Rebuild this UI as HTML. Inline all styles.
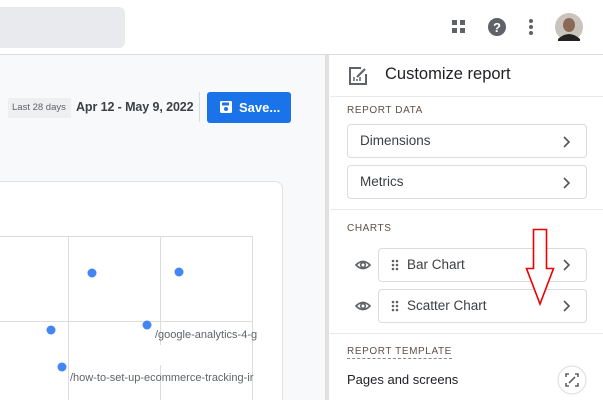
<!DOCTYPE html>
<html><head><style>
*{box-sizing:border-box;margin:0;padding:0}
html,body{width:603px;height:400px;overflow:hidden}
body{position:relative;background:#fff;font-family:"Liberation Sans",Arial,sans-serif;color:#202124}
.a{position:absolute}
.box{position:absolute;border:1px solid #dadce0;border-radius:4px;background:#fff;font-size:13.5px;color:#3c4043}
.lbl{position:absolute;font-size:10px;letter-spacing:.6px;color:#5f4f4a}
</style></head><body>
<div class="a" style="left:0;top:7px;width:125px;height:41px;background:#e8eaed;border-radius:0 6px 6px 0"></div>
<svg class="a" style="left:450px;top:18px" width="18" height="18"><g fill="#5f6368"><rect x="2" y="2" width="5" height="5"/><rect x="10" y="2" width="5" height="5"/><rect x="2" y="10" width="5" height="5"/><rect x="10" y="10" width="5" height="5"/></g></svg>
<svg class="a" style="left:487px;top:17px" width="20" height="20"><circle cx="10" cy="10" r="9" fill="#5f6368"/><text x="10" y="15" font-size="13" font-weight="bold" fill="#fff" text-anchor="middle" font-family="Liberation Sans">?</text></svg>
<svg class="a" style="left:526px;top:17px" width="10" height="20"><g fill="#5f6368"><circle cx="5" cy="4" r="2"/><circle cx="5" cy="10" r="2"/><circle cx="5" cy="16" r="2"/></g></svg>
<svg class="a" style="left:555px;top:13px" width="28" height="28"><circle cx="14" cy="14" r="14" fill="#c9c4be"/><ellipse cx="14" cy="12" rx="6" ry="7" fill="#8a6a55"/><path d="M3 26 Q14 16 25 26 L25 28 L3 28Z" fill="#222"/></svg>
<div class="a" style="left:0;top:54px;width:603px;height:1px;background:#dadce0"></div>
<div class="a" style="left:0;top:55px;width:325px;height:345px;background:#f8f9fa"></div>
<div class="a" style="left:325px;top:55px;width:4px;height:345px;background:#e0e0e0"></div>
<div class="a" style="left:8px;top:98px;width:63px;height:20px;background:#eeeff1;font-size:9.5px;color:#5f6368;line-height:20px;padding-left:4px">Last 28 days</div>
<div class="a" style="left:76px;top:100px;font-size:12.5px;font-weight:bold;color:#3c4043;letter-spacing:-0.1px">Apr 12 - May 9, 2022</div>
<div class="a" style="left:199px;top:92px;width:1px;height:30px;background:#dadce0"></div>
<div class="a" style="left:207px;top:92px;width:84px;height:31px;background:#1a73e8;border-radius:3px;color:#fff;font-size:13px;font-weight:bold;line-height:31px;padding-left:32px">Save...</div>
<svg class="a" style="left:219px;top:100px" width="14" height="14"><rect x="1" y="1" width="12" height="12" rx="1.5" fill="#fff"/><rect x="3" y="2.5" width="7" height="3" fill="#1a73e8"/><circle cx="7" cy="9" r="2" fill="#1a73e8"/></svg>
<div class="a" style="left:0;top:181px;width:283px;height:219px;background:#fff;border:1px solid #e3e3e3;border-left:none;border-bottom:none;border-radius:0 8px 0 0"></div>
<svg class="a" style="left:0;top:230px" width="290" height="170">
<g stroke="#dadce0" stroke-width="1"><line x1="0" y1="6.5" x2="252" y2="6.5"/><line x1="0" y1="91.5" x2="252" y2="91.5"/><line x1="68.5" y1="6" x2="68.5" y2="170"/><line x1="160.5" y1="6" x2="160.5" y2="170"/><line x1="252.5" y1="6" x2="252.5" y2="170"/></g>
<rect x="160" y="115" width="92" height="20" fill="#fff"/>
<g fill="#4285f4"><circle cx="92" cy="43" r="4.5"/><circle cx="179" cy="42" r="4.5"/><circle cx="51" cy="100" r="4.5"/><circle cx="147" cy="95" r="4.5"/><circle cx="62" cy="137" r="4.5"/></g>
<text x="155" y="108" font-size="11" fill="#5f6368" font-family="Liberation Sans">/google-analytics-4-g</text>
<text x="70" y="151" font-size="11" fill="#5f6368" font-family="Liberation Sans">/how-to-set-up-ecommerce-tracking-ir</text>
</svg>
<svg class="a" style="left:348px;top:66px" width="20" height="20"><path d="M13 2H2v16h16V8" fill="none" stroke="#5f6368" stroke-width="2"/><path d="M9 11l8-8" stroke="#5f6368" stroke-width="2"/><path d="M6 15v-4M9 15v-2M12 15v-4" stroke="#5f6368" stroke-width="1.5"/></svg>
<div class="a" style="left:385px;top:65px;font-size:16.5px;color:#202124">Customize report</div>
<div class="a" style="left:330px;top:96px;width:273px;height:1px;background:#e8eaed"></div>
<div class="lbl" style="left:347px;top:105px">REPORT DATA</div>
<div class="box" style="left:347px;top:124px;width:240px;height:34px;line-height:32px;padding-left:12px">Dimensions</div>
<div class="box" style="left:347px;top:165px;width:240px;height:34px;line-height:32px;padding-left:12px">Metrics</div>
<div class="a" style="left:330px;top:209px;width:273px;height:1px;background:#e8eaed"></div>
<div class="lbl" style="left:347px;top:223px">CHARTS</div>
<div class="box" style="left:378px;top:248px;width:209px;height:34px;line-height:32px;padding-left:28px">Bar Chart</div>
<div class="box" style="left:378px;top:289px;width:209px;height:34px;line-height:32px;padding-left:28px">Scatter Chart</div>
<svg class="a" style="left:0;top:0" width="603" height="400">
<g fill="none" stroke="#555" stroke-width="1.6"><path d="M564 137l5 5-5 5M564 178l5 5-5 5M564 260l5 5-5 5M564 301l5 5-5 5"/></g>
<g fill="#5f6368"><circle cx="393" cy="261" r="1.3"/><circle cx="397" cy="261" r="1.3"/><circle cx="393" cy="265" r="1.3"/><circle cx="397" cy="265" r="1.3"/><circle cx="393" cy="269" r="1.3"/><circle cx="397" cy="269" r="1.3"/>
<circle cx="393" cy="302" r="1.3"/><circle cx="397" cy="302" r="1.3"/><circle cx="393" cy="306" r="1.3"/><circle cx="397" cy="306" r="1.3"/><circle cx="393" cy="310" r="1.3"/><circle cx="397" cy="310" r="1.3"/></g>
<g fill="none" stroke="#5f6368" stroke-width="1.6"><path d="M356 265q7-7 14 0q-7 7-14 0z"/><circle cx="363" cy="265" r="2.3"/><path d="M356 306q7-7 14 0q-7 7-14 0z"/><circle cx="363" cy="306" r="2.3"/></g>
<path d="M533.5 229.5h13v39h7l-13.5 35.5-13.5-35.5h7z" fill="#fff" stroke="#e00" stroke-width="1.6"/>
<circle cx="572" cy="380" r="14" fill="#fff" stroke="#dadce0"/>
<path d="M566 377v-3h3M575 374h3v3M578 383v3h-3M569 386h-3v-3M569 383l6-6" fill="none" stroke="#5f6368" stroke-width="1.6"/>
</svg>
<div class="a" style="left:330px;top:333px;width:273px;height:1px;background:#e8eaed"></div>
<div class="lbl" style="left:347px;top:346px;border-bottom:1px dashed #888;padding-bottom:1px">REPORT TEMPLATE</div>
<div class="a" style="left:347px;top:372px;font-size:13px;color:#202124">Pages and screens</div>
</body></html>
